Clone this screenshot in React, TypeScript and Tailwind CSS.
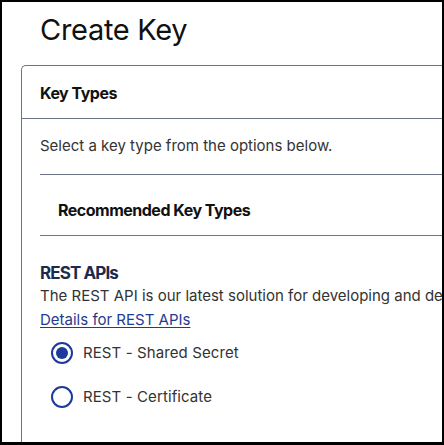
import React from "react";

const font = { fontFamily: "Inter, 'Noto Sans', sans-serif" };

function Radio({ checked, label }: { checked?: boolean; label: string }) {
  return (
    <label className="flex items-center gap-[10px] h-[44px] pl-[11px]">
      <span className="flex items-center justify-center w-[22px] h-[22px] rounded-full border-2 border-[#1c3a9c]">
        {checked && <span className="w-[12px] h-[12px] rounded-full bg-[#1c3a9c]" />}
      </span>
      <span className="text-[15px] text-[#333] tracking-[0.1px]">{label}</span>
    </label>
  );
}

export default function App() {
  return (
    <div
      className="w-[444px] h-[445px] bg-white border-black border-t-2 border-l-2 border-r-2 border-b-[3px] overflow-hidden"
      style={font}
    >
      <h1 className="pl-[38px] pt-[10px] h-[63px] text-[29px] leading-[36px] font-normal text-[#111] tracking-[-0.3px] whitespace-nowrap">
        Create Key
      </h1>

      <div className="ml-[19px] w-[560px] h-[420px] border-l border-t border-[#6b7586] rounded-tl-[5px]">
        <div className="h-[53px] flex items-center pl-[18px] pt-[1px] border-b border-[#6b7586]">
          <span className="text-[16px] font-bold text-[#111] tracking-[-0.5px]">Key Types</span>
        </div>

        <div className="pl-[18px]">
          <div className="h-[56px] flex items-center border-b border-[#6b7586]">
            <p className="text-[15px] text-[#333] whitespace-nowrap">Select a key type from the options below.</p>
          </div>
          <div className="h-[61px] pt-[25px] pl-[18px] border-b border-[#6b7586]">
            <span className="block text-[16px] leading-[20px] font-bold text-[#111] tracking-[-0.5px]">
              Recommended Key Types
            </span>
          </div>

          <div className="pt-[25px]">
            <h2 className="text-[17px] leading-[24px] font-bold text-[#1b2a4e] tracking-[-0.9px]">REST APIs</h2>
            <p className="text-[15px] leading-[22px] text-[#333] whitespace-nowrap">
              The REST API is our latest solution for developing and deploying integrations.
            </p>
            <a href="#" className="text-[15px] leading-[22px] text-[#1f3c91] underline underline-offset-2">
              Details for REST APIs
            </a>
            <div>
              <Radio checked label="REST - Shared Secret" />
              <Radio label="REST - Certificate" />
            </div>
          </div>
        </div>
      </div>
    </div>
  );
}
